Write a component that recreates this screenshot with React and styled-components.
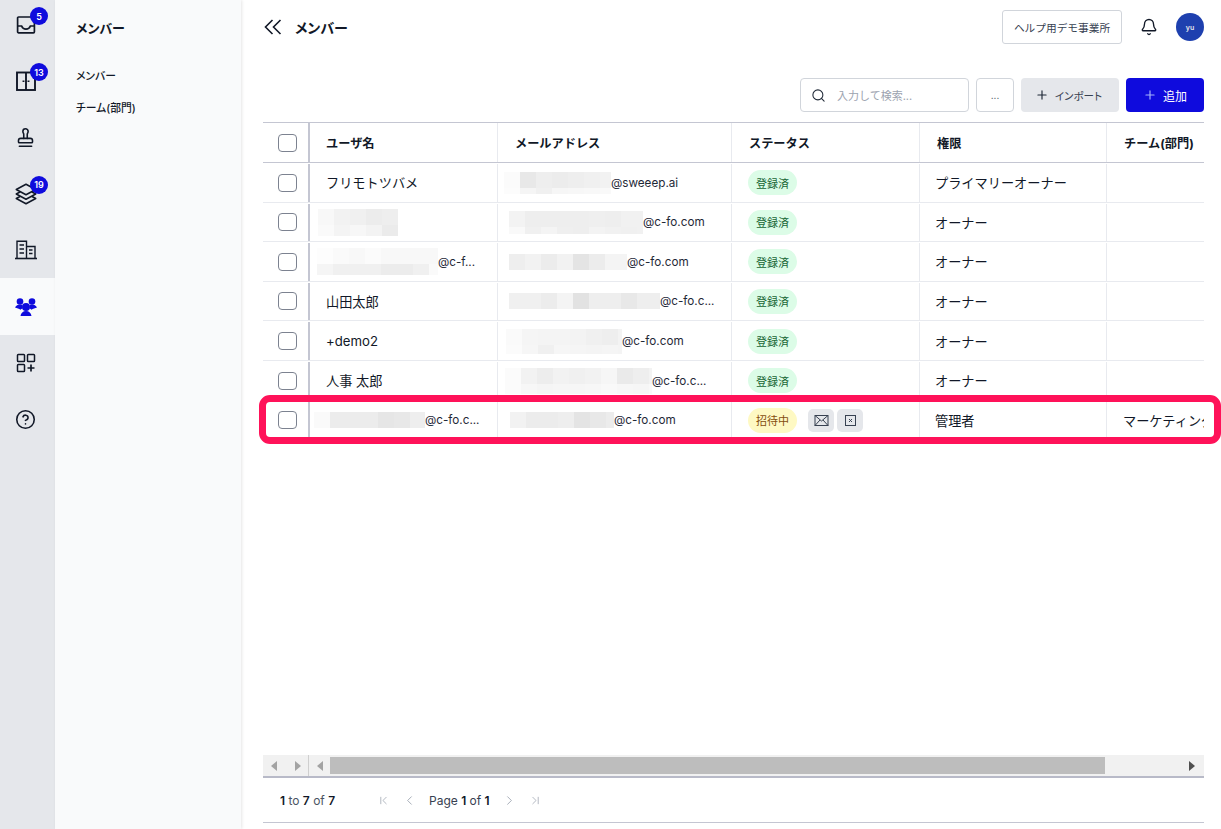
import styled, { createGlobalStyle } from "styled-components";
import {
  Bell,
  ChevronFirst,
  ChevronLast,
  ChevronLeft,
  ChevronRight,
  CircleHelp,
  Plus,
  Search,
  Stamp,
} from "lucide-react";
import { HiOutlineSquare3Stack3D } from "react-icons/hi2";

const BLUE = "#0f0bdd";

const GlobalStyle = createGlobalStyle`
  html, body {
    margin: 0;
    height: 100%;
    overflow: hidden;
  }
  body {
    font-family: Inter, "Noto Sans CJK JP", sans-serif;
    color: #111827;
    background: #fff;
  }
`;

const InboxIcon = () => (
  <svg width="20" height="20" viewBox="0 0 20 20" fill="none" stroke="currentColor" strokeWidth="1.7">
    <rect x="1.6" y="2" width="16.8" height="15.8" rx="1" />
    <path d="M1.6 11h4c1 2.6 2.4 3.2 4.4 3.2s3.400-.6 4.400-3.200h4" />
  </svg>
);

const DoorIcon = () => (
  <svg width="22" height="22" viewBox="0 0 22 22" fill="none" stroke="currentColor" strokeWidth="1.9">
    <rect x="2" y="2.500" width="18" height="17.500" />
    <path d="M11 2.500V20" />
    <path d="M8.500 10.500v1.500M13.500 10.500v1.500" />
  </svg>
);

const BuildingIcon = () => (
  <svg width="24" height="22" viewBox="0 0 24 22" fill="none" stroke="currentColor" strokeWidth="1.400">
    <path d="M1 19.500h22" strokeWidth="1.600" />
    <path d="M3 19.500V2.200h9.500v17.300" />
    <path d="M12.500 7.500h8.500v12" />
    <path d="M5.500 6h4.500M5.500 10h4.500M5.500 14h4.500M15 11h3.500M15 14.500h3.500" strokeWidth="1.500" />
  </svg>
);

const TeamIcon = () => (
  <svg width="24" height="20" viewBox="0 0 24 20" fill="currentColor">
    <circle cx="6" cy="4.500" r="3.300" />
    <circle cx="18" cy="4.500" r="3.300" />
    <path d="M1 10.500c1-2 2.800-3 5-3 1 0 1.800.2 2.500.6-.5 1.100-.5 2.400 0 3.500-.8.300-1.500.6-2 1.100C5 11.800 3 11 1 10.500z" />
    <path d="M23 10.500c-1-2-2.800-3-5-3-1 0-1.800.2-2.500.6.500 1.100.500 2.400 0 3.500.8.300 1.500.6 2 1.100 1.500-.900 3.500-1.700 5.500-2.200z" />
    <circle cx="12" cy="10" r="4" />
    <path d="M6.500 19c.3-3 2.500-5 5.500-5s5.200 2 5.500 5z" />
  </svg>
);

const AppsIcon = () => (
  <svg width="20" height="20" viewBox="0 0 20 20" fill="none" stroke="currentColor" strokeWidth="1.500">
    <rect x="1.500" y="1.500" width="7" height="7" rx="0.800" />
    <rect x="11.500" y="1.500" width="7" height="7" rx="0.800" />
    <rect x="1.500" y="11.500" width="7" height="7" rx="0.800" />
    <path d="M15 11.500v7M11.500 15h7" strokeWidth="1.700" />
  </svg>
);

const BackIcon = () => (
  <svg width="20" height="18" viewBox="0 0 20 18" fill="none" stroke="currentColor" strokeWidth="1.600">
    <path d="M9.500 2L2.500 9l7 7M17.500 2l-7 7 7 7" />
  </svg>
);

const MailIcon = () => (
  <svg width="15" height="13" viewBox="0 0 15 13" fill="none" stroke="#374151" strokeWidth="1">
    <rect x="1" y="1.500" width="13" height="10" />
    <path d="M1 1.500l6.500 5.500 6.500-5.500M1 11.500l5-5.500M14 11.500l-5-5.500" />
  </svg>
);

const CancelIcon = () => (
  <svg width="13" height="13" viewBox="0 0 13 13" fill="none" stroke="#374151" strokeWidth="1">
    <rect x="1.500" y="1.500" width="10" height="10" />
    <path d="M5 5l3 3M8 5l-3 3" />
  </svg>
);

const Triangle = ({ dir, color }) => (
  <svg width="6" height="10" viewBox="0 0 6 10" fill={color}>
    <path d={dir === "left" ? "M6 0v10L0 5z" : "M0 0v10l6-5z"} />
  </svg>
);

const railItems = [
  { icon: <InboxIcon />, badge: 5 },
  { icon: <DoorIcon />, badge: 13 },
  { icon: <Stamp size={21} strokeWidth={1.8} /> },
  { icon: <HiOutlineSquare3Stack3D size={24} />, badge: 19 },
  { icon: <BuildingIcon /> },
  { icon: <TeamIcon />, active: true },
  { icon: <AppsIcon /> },
  { icon: <CircleHelp size={21} strokeWidth={1.8} /> },
];

// mosaics stand in for the blurred names in the screenshot, one string per 16px band
const rows = [
  {
    name: "フリモトツバメ",
    mail: { x: 6, w: 107, h: 22, bands: ["fb e8 ee ec ee f0 f2", "fc f5 f0 f6 f7 f8 f9"], text: "@sweeep.ai" },
    role: "プライマリーオーナー",
  },
  {
    user: { x: 8, w: 80, h: 27, bands: ["f8 f2 f0 ec ee", "fa f4 f7 f3 eb"] },
    mail: { x: 11, w: 134, h: 23, bands: ["f3 ee ee ee ee ef ee f1 f1", "f9 f0 f4 ef ee f3 f1 f0 f1"], text: "@c-fo.com" },
    role: "オーナー",
  },
  {
    user: { x: 7, w: 121, h: 27, bands: ["fd fa f8 fb f8 f8 f8 f8", "f5 f0 f0 f0 ec ec f0 fa"], text: "@c-f..." },
    mail: { x: 11, w: 118, h: 16, bands: ["ee f2 ec f2 e4 ec f4 f4"], text: "@c-fo.com" },
    role: "オーナー",
  },
  {
    name: "山田太郎",
    mail: { x: 11, w: 151, h: 16, bands: ["f0 f0 ec f4 e2 ee ee e8 ee ee"], text: "@c-fo.c..." },
    role: "オーナー",
  },
  {
    name: "+demo2",
    mail: { x: 8, w: 116, h: 25, bands: ["fa f5 f4 f4 f3 f0 ee f3", "fb f6 f0 f6 f5 f4 f5 f4"], text: "@c-fo.com" },
    role: "オーナー",
  },
  {
    name: "人事 太郎",
    mail: { x: 7, w: 147, h: 26, bands: ["fb f2 ed f2 f0 f2 f6 ea ee f3", "fb f7 f5 f6 f6 f7 f9 f7 f6 f9"], text: "@c-fo.c..." },
    role: "オーナー",
  },
  {
    user: { x: 4, w: 111, h: 16, bands: ["fa ec ec ec e6 e8 ee"], text: "@c-fo.c..." },
    mail: { x: 12, w: 104, h: 16, bands: ["f2 ec ec ee e4 e8 ec"], text: "@c-fo.com" },
    invited: true,
    role: "管理者",
    team: "マーケティング",
  },
];

const Blurred = ({ data }) => (
  <BlurredCell $x={data.x}>
    <Mosaic $w={data.w} $h={data.h}>
      {data.bands.map((band, i) => (
        <Band key={i}>
          {band.split(" ").map((shade, j) => (
            <Tile key={j} $shade={shade} />
          ))}
        </Band>
      ))}
    </Mosaic>
    {data.text}
  </BlurredCell>
);

const App = () => {
  return (
    <Page>
      <GlobalStyle />
      <Rail>
        {railItems.map((item, i) => (
          <RailItem key={i} $active={item.active}>
            {item.icon}
            {item.badge && <Badge>{item.badge}</Badge>}
          </RailItem>
        ))}
      </Rail>

      <SubNav>
        <SubTitle>メンバー</SubTitle>
        <SubLink>メンバー</SubLink>
        <SubLink>チーム(部門)</SubLink>
      </SubNav>

      <Main>
        <TopBar>
          <PageTitle>
            <BackIcon />
            メンバー
          </PageTitle>
          <TopRight>
            <OfficeButton>ヘルプ用デモ事業所</OfficeButton>
            <Bell size={18} strokeWidth={1.8} />
            <Avatar>yu</Avatar>
          </TopRight>
        </TopBar>

        <Toolbar>
          <SearchBox>
            <Search size={15} strokeWidth={1.7} color="#1f2937" />
            <SearchHint>入力して検索...</SearchHint>
          </SearchBox>
          <MoreButton>...</MoreButton>
          <ImportButton>
            <Plus size={14} strokeWidth={2} color="#1f2937" />
            インポート
          </ImportButton>
          <AddButton>
            <Plus size={14} strokeWidth={2} color="#a5b4fc" />
            追加
          </AddButton>
        </Toolbar>

        <Table>
          <HeadRow>
            <CheckCell>
              <Checkbox />
            </CheckCell>
            <HeadCell $pad={16}>ユーザ名</HeadCell>
            <HeadCell>メールアドレス</HeadCell>
            <HeadCell>ステータス</HeadCell>
            <HeadCell>権限</HeadCell>
            <HeadCell>チーム(部門)</HeadCell>
          </HeadRow>
          {rows.map((row, i) => (
            <Row key={i}>
              <CheckCell>
                <Checkbox />
              </CheckCell>
              {row.user ? <Blurred data={row.user} /> : <Cell $pad={16}>{row.name}</Cell>}
              <Blurred data={row.mail} />
              <StatusCell $pad={16}>
                <Pill $invited={row.invited}>{row.invited ? "招待中" : "登録済"}</Pill>
                {row.invited && (
                  <RowActions>
                    <RowAction>
                      <MailIcon />
                    </RowAction>
                    <RowAction>
                      <CancelIcon />
                    </RowAction>
                  </RowActions>
                )}
              </StatusCell>
              <Cell $pad={15}>{row.role}</Cell>
              <Cell $pad={16}>{row.team}</Cell>
            </Row>
          ))}
        </Table>

        <ScrollBar>
          <PinnedTrack>
            <Triangle dir="left" color="#a3a3a3" />
            <Triangle dir="right" color="#a3a3a3" />
          </PinnedTrack>
          <Track>
            <Triangle dir="left" color="#a3a3a3" />
            <Thumb />
            <Triangle dir="right" color="#505050" />
          </Track>
        </ScrollBar>

        <Pager>
          <PageCount>
            <b>1</b> to <b>7</b> of <b>7</b>
          </PageCount>
          <PagerNav>
            <ChevronFirst size={13} strokeWidth={1.4} />
            <ChevronLeft size={15} strokeWidth={1.4} />
            <PageText>
              Page <b>1</b> of <b>1</b>
            </PageText>
            <ChevronRight size={15} strokeWidth={1.4} />
            <ChevronLast size={13} strokeWidth={1.4} />
          </PagerNav>
        </Pager>

        <Highlight />
      </Main>
    </Page>
  );
};

const Page = styled.div`
  display: flex;
  height: 100vh;
  overflow: hidden;
`;

const Rail = styled.nav`
  width: 55px;
  flex-shrink: 0;
  margin-top: -3px;
  background: #e5e7eb;
`;

const RailItem = styled.div`
  position: relative;
  height: 56.3px;
  box-sizing: border-box;
  padding-right: 4px;
  display: flex;
  align-items: center;
  justify-content: center;
  color: ${(p) => (p.$active ? BLUE : "#111827")};
  background: ${(p) => (p.$active ? "#f9fafb" : "transparent")};
`;

const Badge = styled.span`
  position: absolute;
  top: 10px;
  left: 30px;
  width: 18px;
  height: 18px;
  border-radius: 50%;
  background: ${BLUE};
  color: #fff;
  font-size: 9px;
  font-weight: 600;
  display: flex;
  align-items: center;
  justify-content: center;
`;

const SubNav = styled.aside`
  width: 186px;
  flex-shrink: 0;
  background: #f9fafb;
  box-shadow: 1px 0 3px rgba(0, 0, 0, 0.1);
  padding: 18px 0 0 21px;
  box-sizing: border-box;
  z-index: 1;
  font-feature-settings: "palt";
`;

const SubTitle = styled.div`
  font-size: 13px;
  font-weight: 700;
  line-height: 20px;
  margin-bottom: 23px;
`;

const SubLink = styled.div`
  font-size: 10.800px;
  font-weight: 500;
  line-height: 32px;
`;

const Main = styled.main`
  position: relative;
  flex: 1;
  min-width: 0;
  display: flex;
  flex-direction: column;
  padding: 0 17px 6px 22px;
`;

const TopBar = styled.header`
  height: 54px;
  flex-shrink: 0;
  display: flex;
  align-items: center;
  justify-content: space-between;
`;

const PageTitle = styled.h1`
  margin: 0;
  display: flex;
  align-items: center;
  gap: 12px;
  font-size: 14px;
  font-weight: 700;
  font-feature-settings: "palt";
`;

const TopRight = styled.div`
  display: flex;
  align-items: center;
  gap: 18px;
`;

const OfficeButton = styled.button`
  width: 120px;
  height: 34px;
  padding: 0;
  background: #fff;
  border: 1px solid #d1d5db;
  border-radius: 3px;
  font: inherit;
  font-size: 10.700px;
  color: #374151;
`;

const Avatar = styled.div`
  width: 28px;
  height: 28px;
  border-radius: 50%;
  background: #1e40af;
  color: #e5e7eb;
  font-size: 7px;
  font-weight: 600;
  display: flex;
  align-items: center;
  justify-content: center;
`;

const Toolbar = styled.div`
  margin-top: 24px;
  height: 34px;
  flex-shrink: 0;
  display: flex;
  justify-content: flex-end;
  gap: 7px;
`;

const SearchBox = styled.div`
  width: 169px;
  box-sizing: border-box;
  display: flex;
  align-items: center;
  gap: 11px;
  padding-left: 10px;
  border: 1px solid #d1d5db;
  border-radius: 4px;
`;

const SearchHint = styled.span`
  font-size: 11px;
  color: #9ca3af;
`;

const ToolButton = styled.button`
  height: 34px;
  padding: 0;
  border-radius: 4px;
  font: inherit;
  font-size: 12px;
  display: flex;
  align-items: center;
  justify-content: center;
  gap: 6px;
`;

const MoreButton = styled(ToolButton)`
  width: 38px;
  background: #fff;
  border: 1px solid #d1d5db;
  color: #4b5563;
  font-size: 10px;
`;

const ImportButton = styled(ToolButton)`
  width: 98px;
  padding-right: 3px;
  background: #e5e7eb;
  border: none;
  color: #374151;
  font-size: 10.500px;
  font-feature-settings: "palt";
`;

const AddButton = styled(ToolButton)`
  width: 78px;
  background: ${BLUE};
  border: none;
  color: #fff;
`;

const Table = styled.div`
  flex: 1;
  margin-top: 10px;
  min-height: 0;
  overflow: hidden;
  border-top: 1px solid #c4c6d2;
`;

const columns = "47px 188px 234px 188px 187px 190px";

const HeadRow = styled.div`
  display: grid;
  grid-template-columns: ${columns};
  height: 39px;
  border-bottom: 1px solid #c4c6d2;
  font-size: 12.200px;
  font-weight: 700;
`;

const Row = styled.div`
  display: grid;
  grid-template-columns: ${columns};
  height: 39.57px;
  box-sizing: border-box;
  padding-top: 1px;
  border-bottom: 1px solid #e8eaef;
`;

const Cell = styled.div`
  display: flex;
  align-items: center;
  padding-left: ${(p) => p.$pad ?? 17}px;
  border-right: 1px solid #e8eaef;
  white-space: nowrap;
  overflow: hidden;
  font-size: 13.200px;
`;

const HeadCell = styled(Cell)`
  font-size: inherit;
  font-weight: inherit;
`;

const CheckCell = styled.div`
  display: flex;
  align-items: center;
  justify-content: center;
  padding-left: 4px;
  border-right: 2px solid #c4c6d2;
`;

const Checkbox = styled.span`
  width: 19px;
  height: 18px;
  box-sizing: border-box;
  border: 1.500px solid #7c8290;
  border-radius: 4px;
  background: #fff;
`;

const BlurredCell = styled.div`
  display: flex;
  align-items: center;
  padding-left: ${(p) => p.$x}px;
  border-right: 1px solid #e8eaef;
  white-space: nowrap;
  overflow: hidden;
  font-size: 11.700px;
  color: #1f2937;
`;

const Mosaic = styled.div`
  width: ${(p) => p.$w}px;
  height: ${(p) => p.$h}px;
  flex-shrink: 0;
  overflow: hidden;
`;

const Band = styled.div`
  display: flex;
  height: 16px;
  overflow: hidden;
`;

const Tile = styled.span`
  width: 16px;
  height: 16px;
  flex-shrink: 0;
  background: #${(p) => p.$shade.repeat(3)};
`;

const StatusCell = styled(Cell)`
  gap: 11px;
`;

const Pill = styled.span`
  width: 49px;
  height: 25px;
  border-radius: 13px;
  display: flex;
  align-items: center;
  justify-content: center;
  font-size: 11px;
  background: ${(p) => (p.$invited ? "#fef9c3" : "#dcfce7")};
  color: ${(p) => (p.$invited ? "#854d0e" : "#166534")};
`;

const RowActions = styled.div`
  display: flex;
  gap: 3px;
`;

const RowAction = styled.span`
  width: 26px;
  height: 23px;
  border-radius: 5px;
  background: #e5e7eb;
  display: flex;
  align-items: center;
  justify-content: center;
`;

const ScrollBar = styled.div`
  display: flex;
  height: 21px;
  flex-shrink: 0;
  background: #f1f1f1;
  border-bottom: 2px solid #b8bac8;
`;

const PinnedTrack = styled.div`
  width: 46px;
  box-sizing: border-box;
  flex-shrink: 0;
  display: flex;
  align-items: center;
  gap: 18px;
  padding-left: 8px;
  border-right: 1px solid #cfcfcf;
`;

const Track = styled.div`
  flex: 1;
  display: flex;
  align-items: center;
  padding: 0 9px 0 8px;
`;

const Thumb = styled.div`
  width: 775px;
  height: 17px;
  margin: 0 auto 0 7px;
  background: #bdbdbd;
`;

const Pager = styled.footer`
  height: 44px;
  flex-shrink: 0;
  display: flex;
  align-items: center;
  padding-left: 17px;
  border-bottom: 1px solid #c4c6d2;
  font-size: 12px;
  color: #4b5563;

  b {
    font-weight: 600;
    color: #111827;
  }
`;

const PageCount = styled.span`
  width: 97px;
`;

const PagerNav = styled.div`
  display: flex;
  align-items: center;
  gap: 12px;
  color: #9ca3af;
`;

const PageText = styled.span`
  color: #374151;
`;

const Highlight = styled.div`
  position: absolute;
  top: 395px;
  left: 18px;
  right: 0;
  height: 49px;
  box-sizing: border-box;
  border: 7px solid #ff1259;
  border-radius: 11px;
  pointer-events: none;
`;

export default App;
